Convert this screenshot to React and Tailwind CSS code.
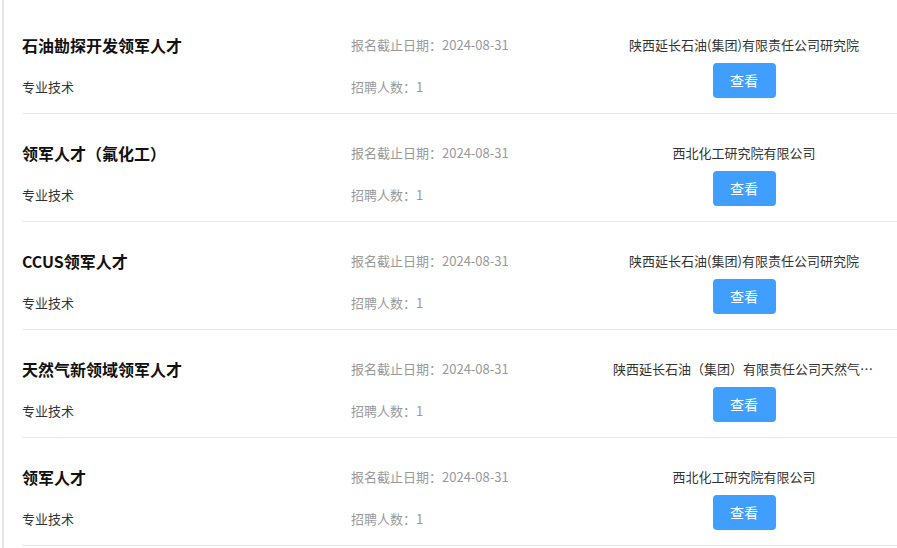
const jobs = [
    { title: "石油勘探开发领军人才", company: "陕西延长石油(集团)有限责任公司研究院" },
    { title: "领军人才（氟化工）", company: "西北化工研究院有限公司" },
    { title: "CCUS领军人才", company: "陕西延长石油(集团)有限责任公司研究院" },
    { title: "天然气新领域领军人才", company: "陕西延长石油（集团）有限责任公司天然气研究院" },
    { title: "领军人才", company: "西北化工研究院有限公司" },
];

function JobRow({ title, company }) {
    return (
        <div className="flex h-[108px] border-b border-[#e8e8e8]">
            {/* Title */}
            <div className="w-[329px] shrink-0">
                <div className="mt-[27px] h-[24px] text-[16px] leading-[24px] font-bold text-[#111]">
                    {title}
                </div>
                <div className="mt-[20px] h-[20px] text-[13px] leading-[20px] text-[#333]">
                    专业技术
                </div>
            </div>

            {/* Info */}
            <div className="w-[262px] shrink-0 text-[13px] leading-[20px] text-[#999]">
                <div className="mt-[29px]">报名截止日期：2024-08-31</div>
                <div className="mt-[22px]">招聘人数：1</div>
            </div>

            {/* Company */}
            <div className="w-[262px] shrink-0 flex flex-col items-center">
                <div className="mt-[29px] w-full truncate text-center text-[13px] leading-[20px] text-[#333]">
                    {company}
                </div>
                <button className="mt-[8px] h-[35px] w-[63px] rounded-[4px] bg-[#409eff] text-[14px] text-white">
                    查看
                </button>
            </div>
        </div>
    );
}

export default function App() {
    return (
        <div
            className="h-[548px] w-[897px] overflow-hidden bg-white"
            style={{ fontFamily: '"Noto Sans CJK SC", "Noto Sans", sans-serif' }}
        >
            <div className="ml-[2px] h-full border-l-2 border-[#e6e6e6] pl-[18px] pt-[6px]">
                {jobs.map((job, i) => (
                    <JobRow key={i} {...job} />
                ))}
            </div>
        </div>
    );
}
